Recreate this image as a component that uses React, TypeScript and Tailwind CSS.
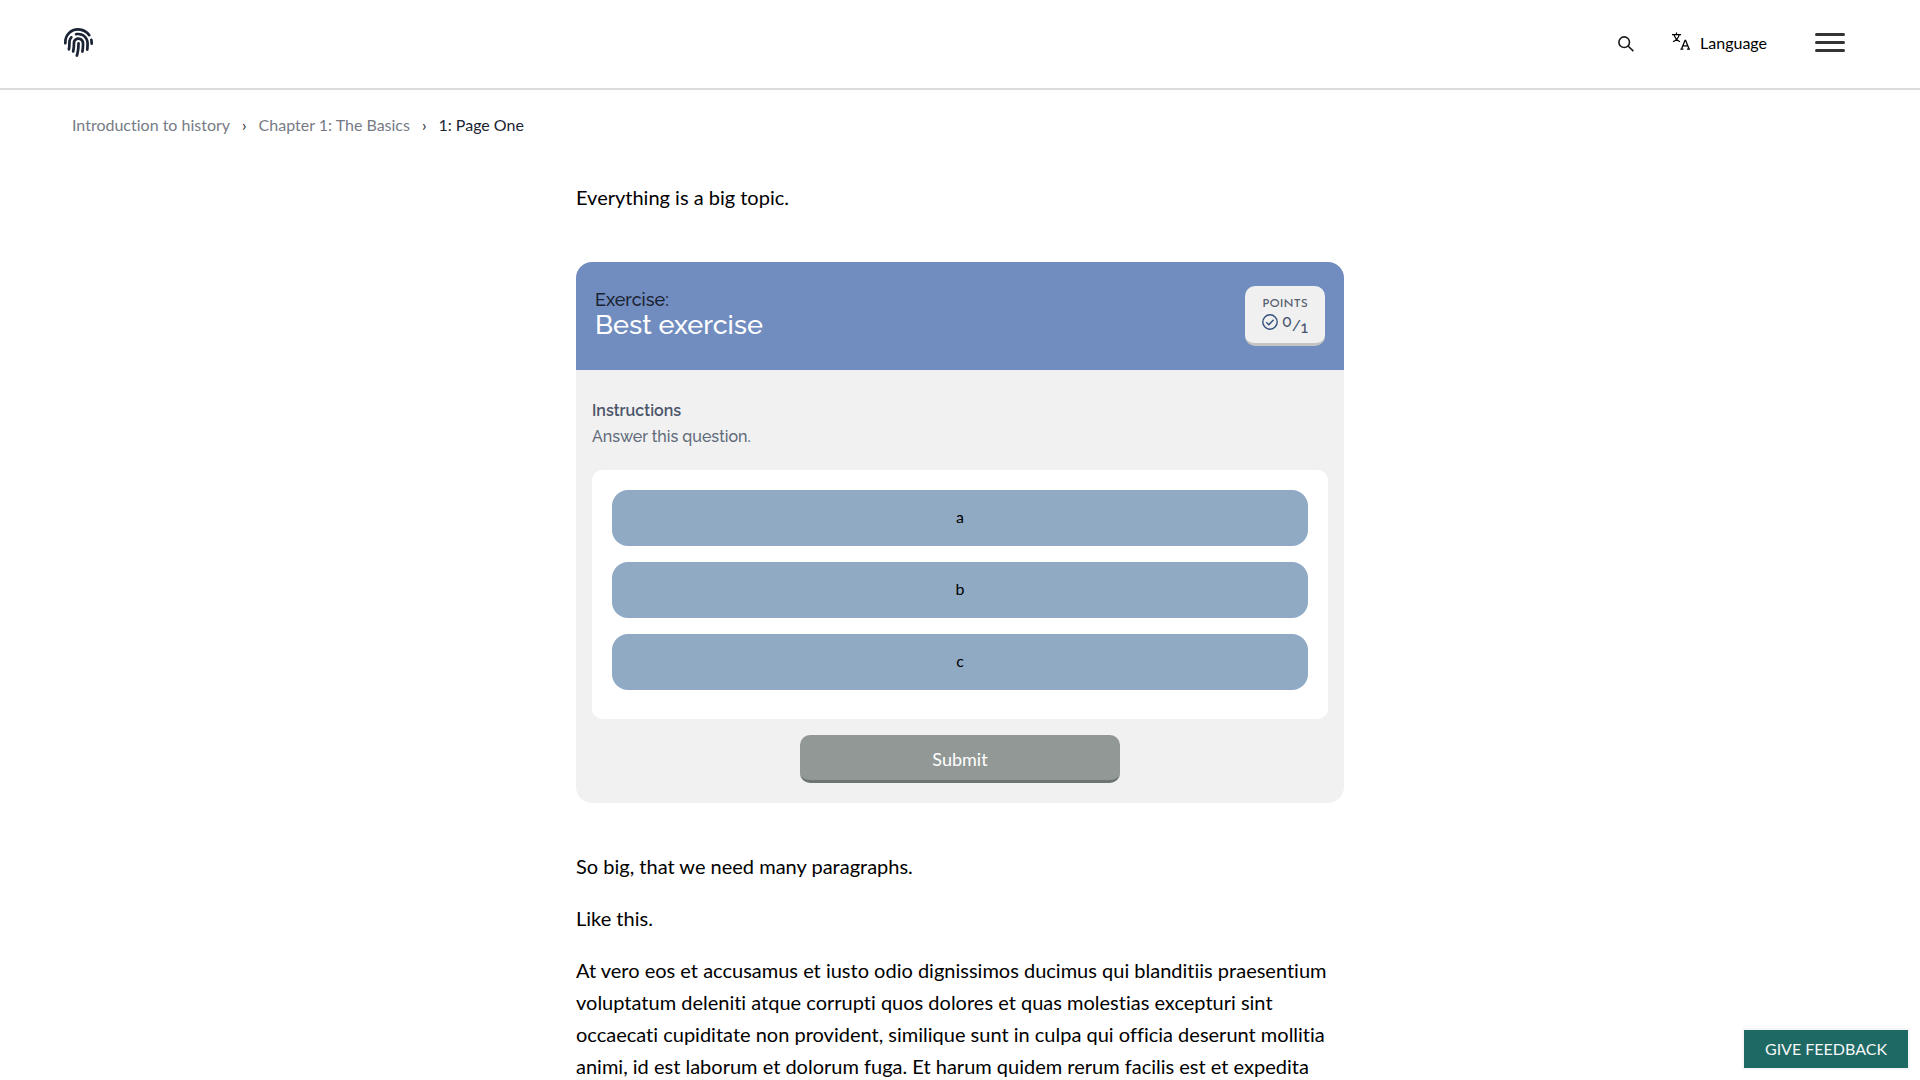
import { FaFingerprint } from "react-icons/fa";

const instructions = "Answer this question.";
const options = ["a", "b", "c"];

function Header() {
  return (
    <header className="flex h-[90px] items-center justify-between border-b-2 border-[#dcdcdc] pr-[75px] pl-16">
      <a href="#home" aria-label="Home" className="mb-1 text-[#1a2333]">
        <FaFingerprint size={29} />
      </a>
      <div className="flex items-center">
        <button type="button" aria-label="Search" className="mr-[38px] text-[#1a1a1a]">
          <svg width="16" height="16" viewBox="0 0 16 16" fill="none" stroke="currentColor" strokeWidth="1.6">
            <circle cx="6.2" cy="6.2" r="5.3" />
            <path d="M10 10l5.4 5.2" />
          </svg>
        </button>
        <button type="button" className="mb-[2px] flex items-center gap-[10px] text-base text-black">
          <svg width="18" height="18" viewBox="0 0 18 18" fill="none" stroke="currentColor" className="mb-1">
            <path strokeWidth="1.2" d="M0 2.6h9M4.500.4v2.2M7.200 2.800C6.400 5.800 4 8.300 1 9.800M2 2.800c1 3.200 3 5.500 6 7" />
            <path strokeWidth="1.3" d="M9.600 16.700l3.400-8.400h.6l3.400 8.400M10.800 13.800h5" />
            <path strokeWidth="1.200" d="M8.400 17.200h3M15 17.200h3" />
          </svg>
          Language
        </button>
        <button type="button" aria-label="Open menu" className="mb-[3px] ml-12 flex w-[30px] flex-col gap-[5px]">
          <span className="h-[3px] w-full rounded-sm bg-[#333]" />
          <span className="h-[3px] w-full rounded-sm bg-[#333]" />
          <span className="h-[3px] w-full rounded-sm bg-[#333]" />
        </button>
      </div>
    </header>
  );
}

function Breadcrumbs() {
  return (
    <nav aria-label="Breadcrumbs" className="px-[72px] pt-[23px] text-base leading-6">
      <ol className="flex gap-3 text-[#767b85]">
        <li><a href="#course">Introduction to history</a></li>
        <li aria-hidden="true" className="text-[#1a2333]">›</li>
        <li><a href="#chapter">Chapter 1: The Basics</a></li>
        <li aria-hidden="true" className="text-[#1a2333]">›</li>
        <li aria-current="page" className="text-[#1a2333]">1: Page One</li>
      </ol>
    </nav>
  );
}

function Points() {
  return (
    <div className="flex h-[60px] w-20 flex-col items-center rounded-[10px] border-b-[3px] border-[#c4c4c4] bg-[#f0f0f0] pt-[10px] text-[#57606f]">
      <span className="font-['Josefin_Sans','Lato',sans-serif] text-xs leading-4 font-medium">POINTS</span>
      <div className="flex items-start gap-1 pt-[2px] font-['Raleway','Open_Sans',sans-serif] text-base leading-4 font-medium text-[#44546f]">
        <svg width="16" height="16" viewBox="0 0 16 16" fill="none" stroke="#35507f" strokeWidth="1.4">
          <circle cx="8" cy="8" r="7.2" />
          <path d="M4.300 8.300l2.500 2.400 4.800-5" />
        </svg>
        <span className="flex">
          <span>0</span>
          <span className="pt-1 text-sm leading-4">/</span>
          <span className="pt-[6px]">1</span>
        </span>
      </div>
    </div>
  );
}

function Exercise() {
  return (
    <section className="mt-[49px] mb-[47px] overflow-hidden rounded-2xl bg-[#f1f1f1]">
      <div className="flex items-start justify-between bg-[#718dbf] py-6 pr-[19px] pl-[19px]">
        <h2 className="font-['Raleway','Open_Sans',sans-serif] text-[27px] leading-7 font-medium text-white">
          <span className="block pt-[3px] text-lg leading-[22px] text-[#1a2333]">Exercise:</span>
          Best exercise
        </h2>
        <Points />
      </div>
      <div className="px-4 pt-7 pb-5">
        <div className="mb-5 font-['Raleway','Open_Sans',sans-serif] text-base leading-[26px] text-[#5f6b7a]">
          <h3 className="font-semibold text-[#4c566a]">Instructions</h3>
          <p className="font-medium">{instructions}</p>
        </div>
        <div className="mb-4 flex flex-col gap-4 rounded-[10px] bg-white px-5 pt-5 pb-[29px]">
          {options.map((option) => (
            <button key={option} type="button" className="h-14 rounded-2xl bg-[#90aac4] pb-[2px] text-base text-black">
              {option}
            </button>
          ))}
        </div>
        <button type="button" className="mx-auto block h-12 w-80 rounded-[10px] border-b-[3px] border-[#6c7572] bg-[#929896] pt-[2px] text-lg text-white">
          Submit
        </button>
      </div>
    </section>
  );
}

export default function App() {
  return (
    <div className="h-screen overflow-hidden bg-white font-['Lato',sans-serif] text-black [font-variant-ligatures:none]">
      <Header />
      <Breadcrumbs />
      <main className="mx-auto max-w-3xl pt-11 text-xl leading-8">
        <p>Everything is a big topic.</p>
        <Exercise />
        <div className="flex flex-col gap-5">
          <p>So big, that we need many paragraphs.</p>
          <p>Like this.</p>
          <p>
            At vero eos et accusamus et iusto odio dignissimos ducimus qui blanditiis praesentium
            voluptatum deleniti atque corrupti quos dolores et quas molestias excepturi sint
            occaecati cupiditate non provident, similique sunt in culpa qui officia deserunt mollitia
            animi, id est laborum et dolorum fuga. Et harum quidem rerum facilis est et expedita
          </p>
        </div>
      </main>
      <button type="button" className="fixed right-[10px] bottom-[10px] border-2 border-[#f5f6f7] bg-[#1f6964] px-[21px] py-[7px] text-base leading-6 text-[#f5f6f7]">
        GIVE FEEDBACK
      </button>
    </div>
  );
}
